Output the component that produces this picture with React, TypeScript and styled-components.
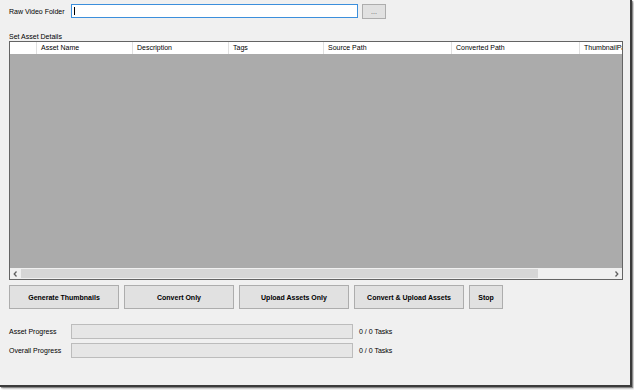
import React from "react";
import styled, { createGlobalStyle } from "styled-components";

const Global = createGlobalStyle`
  html, body { margin: 0; padding: 0; background: #ffffff; }
  body { font-family: "Liberation Sans", Arial, sans-serif; }
  #root { width: 634px; height: 390px; overflow: hidden; }
`;

const Window = styled.div`
  box-sizing: content-box;
  width: 621px;
  height: 382px;
  padding: 3px 0 0 9px;
  background: #f0f0f0;
  border-right: 2px solid #3b3b3b;
  border-bottom: 2px solid #3b3b3b;
  box-shadow: 1px 1px 1px rgba(0, 0, 0, 0.35), 2px 2px 2px rgba(0, 0, 0, 0.2);
  display: flex;
  flex-direction: column;
  font-size: 7px;
  color: #000;
`;

const Row = styled.div<{ $top?: number }>`
  display: flex;
  align-items: center;
  margin-top: ${(p) => p.$top ?? 0}px;
`;

const Label = styled.div`
  width: 62px;
  flex: none;
  white-space: nowrap;
  font-size: 7px;
  line-height: 9px;
`;

const TextBox = styled.div`
  box-sizing: border-box;
  width: 287px;
  height: 14px;
  background: #fff;
  border: 1px solid #3c8fdc;
  display: flex;
  align-items: center;
  padding-left: 2px;
`;

const Caret = styled.span`
  display: block;
  width: 1px;
  height: 8px;
  background: #000;
`;

const BrowseButton = styled.div`
  box-sizing: border-box;
  width: 24px;
  height: 15px;
  margin-left: 4px;
  margin-top: 1px;
  background: #e1e1e1;
  border: 1px solid #adadad;
  display: flex;
  align-items: center;
  justify-content: center;
  font-size: 7px;
  color: #555;
  line-height: 7px;
  padding-bottom: 1px;
`;

const SectionLabel = styled.div`
  margin-top: 13px;
  font-size: 7px;
  line-height: 9px;
`;

const Grid = styled.div`
  box-sizing: border-box;
  width: 614px;
  height: 239px;
  border: 1px solid #646464;
  display: flex;
  flex-direction: column;
  overflow: hidden;
`;

const Header = styled.div`
  display: flex;
  height: 12px;
  flex: none;
  background: #fff;
`;

const HeaderCell = styled.div<{ $w: number; $first?: boolean }>`
  box-sizing: border-box;
  width: ${(p) => p.$w}px;
  flex: none;
  border-left: ${(p) => (p.$first ? "none" : "1px solid #e0e0e0")};
  padding-left: 4px;
  font-size: 7px;
  line-height: 12px;
  white-space: nowrap;
  overflow: hidden;
`;

const Body = styled.div`
  flex: 1;
  background: #ababab;
`;

const HScroll = styled.div`
  height: 11px;
  flex: none;
  display: flex;
  background: #f0f0f0;
`;

const ScrollArrow = styled.div`
  width: 11px;
  flex: none;
  display: flex;
  align-items: center;
  justify-content: center;
`;

const Thumb = styled.div`
  width: 517px;
  flex: none;
  margin: 1px 0;
  background: #d6d6d6;
`;

const Track = styled.div`
  flex: 1;
`;

const ButtonRow = styled.div`
  display: flex;
  gap: 5px;
  margin-top: 5px;
`;

const ActionButton = styled.div<{ $w: number }>`
  box-sizing: border-box;
  width: ${(p) => p.$w}px;
  height: 24px;
  background: #e1e1e1;
  border: 1px solid #adadad;
  display: flex;
  align-items: center;
  justify-content: center;
  font-size: 7px;
  font-weight: bold;
  white-space: nowrap;
`;

const ProgressBar = styled.div`
  box-sizing: border-box;
  width: 282px;
  height: 15px;
  background: #e6e6e6;
  border: 1px solid #bcbcbc;
  flex: none;
`;

const TaskCount = styled.div`
  margin-left: 6px;
  font-size: 7px;
  white-space: nowrap;
`;

const Chevron = ({ dir }: { dir: "left" | "right" }) => (
  <svg width="5" height="6" viewBox="0 0 5 6">
    <path
      d={dir === "left" ? "M3.5 0.5 L1.2 3 L3.5 5.5" : "M1.5 0.5 L3.8 3 L1.5 5.5"}
      fill="none"
      stroke="#606060"
      strokeWidth="1.3"
    />
  </svg>
);

const columns = [
  { name: "", w: 26 },
  { name: "Asset Name", w: 96 },
  { name: "Description", w: 96 },
  { name: "Tags", w: 95 },
  { name: "Source Path", w: 128 },
  { name: "Converted Path", w: 128 },
  { name: "ThumbnailPath", w: 60 },
];

const buttons = [
  { label: "Generate Thumbnails", w: 110 },
  { label: "Convert Only", w: 110 },
  { label: "Upload Assets Only", w: 110 },
  { label: "Convert & Upload Assets", w: 110 },
  { label: "Stop", w: 34 },
];

export default function App() {
  return (
    <>
      <Global />
      <Window>
        <Row>
          <Label>Raw Video Folder</Label>
          <TextBox>
            <Caret />
          </TextBox>
          <BrowseButton>...</BrowseButton>
        </Row>
        <SectionLabel>Set Asset Details</SectionLabel>
        <Grid>
          <Header>
            {columns.map((c, i) => (
              <HeaderCell key={i} $w={c.w} $first={i === 0}>
                {c.name}
              </HeaderCell>
            ))}
          </Header>
          <Body />
          <HScroll>
            <ScrollArrow>
              <Chevron dir="left" />
            </ScrollArrow>
            <Thumb />
            <Track />
            <ScrollArrow>
              <Chevron dir="right" />
            </ScrollArrow>
          </HScroll>
        </Grid>
        <ButtonRow>
          {buttons.map((b) => (
            <ActionButton key={b.label} $w={b.w}>
              {b.label}
            </ActionButton>
          ))}
        </ButtonRow>
        <Row $top={15}>
          <Label>Asset Progress</Label>
          <ProgressBar />
          <TaskCount>0 / 0 Tasks</TaskCount>
        </Row>
        <Row $top={4}>
          <Label>Overall Progress</Label>
          <ProgressBar />
          <TaskCount>0 / 0 Tasks</TaskCount>
        </Row>
      </Window>
    </>
  );
}
